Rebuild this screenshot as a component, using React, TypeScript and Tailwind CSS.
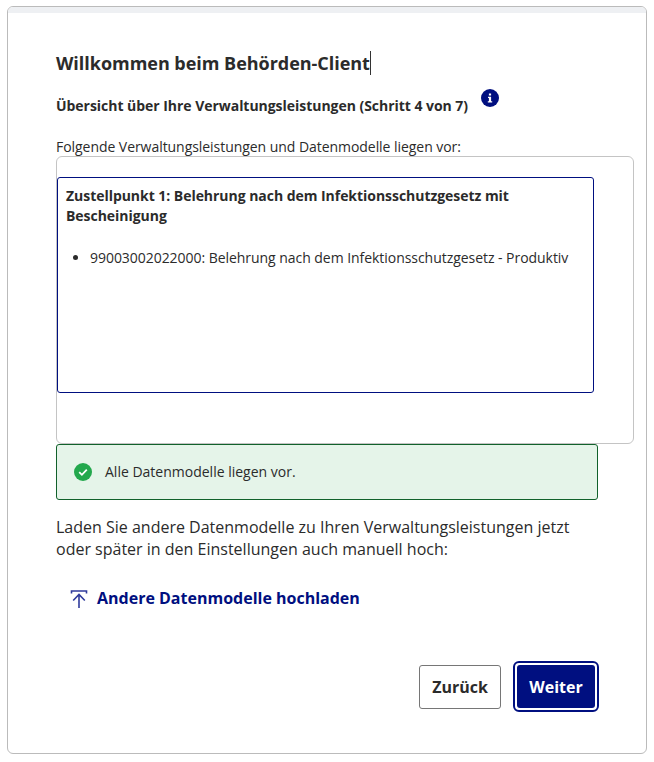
export default function App() {
  return (
    <div className="w-[654px] h-[762px] bg-white text-[#2b2b2b] font-['Open_Sans','Noto_Sans',sans-serif] pl-[7px] pr-[7px] pt-[6px] pb-[8px]">
      <div className="w-[640px] h-[748px] border border-[#bbbbbb] rounded-[6px] bg-white overflow-hidden">
        <div className="h-[6px] bg-[#eef0f3]" />
        <div className="pl-[48px] pr-[48px] pt-[36px]">
          <h1 className="flex h-[28px] items-center text-[18px] leading-[28px] font-bold tracking-[-0.03px]">
            <span>Willkommen beim Behörden-Client</span>
            <span className="w-px h-[24px] bg-[#333333]" />
          </h1>
          <div className="mt-[15px] flex h-[24px] items-start">
            <span className="mt-[4px] text-[14px] leading-[20px] font-bold whitespace-nowrap tracking-[-0.035px]">Übersicht über Ihre Verwaltungsleistungen (Schritt 4 von 7)</span>
            <svg className="ml-[13px] mt-[-3px]" width="18" height="18" viewBox="0 0 18 18">
              <circle cx="9" cy="9" r="9" fill="#000f80" />
              <path d="M7.9 4.4h2.2v2H7.9zM7 7.7h3.1v4.5h1.1v1.4H6.8v-1.4h1.1V9.1H7z" fill="#ffffff" />
            </svg>
          </div>
          <p className="mt-[21px] text-[14px] leading-[20px] whitespace-nowrap tracking-[-0.05px]">Folgende Verwaltungsleistungen und Datenmodelle liegen vor:</p>
          <div className="w-[578px] h-[288px] -mt-[1px] border border-[#c4c4c4] rounded-[6px] pt-[20px]">
            <div className="w-[537px] h-[216px] border border-[#000f80] rounded-[3px] pl-[8px] pt-[8px] pr-[8px]">
              <p className="text-[14px] leading-[20px] font-bold tracking-[-0.04px]">Zustellpunkt 1: Belehrung nach dem Infektionsschutzgesetz mit Bescheinigung</p>
              <ul className="mt-[22px] pl-[24px] list-disc text-[14px] leading-[20px] whitespace-nowrap tracking-[-0.045px]">
                <li>99003002022000: Belehrung nach dem Infektionsschutzgesetz - Produktiv</li>
              </ul>
            </div>
          </div>
          <div className="flex items-center w-[542px] h-[56px] border border-[#11612b] rounded-[3px] bg-[#e5f4e9] pl-[17px]">
            <svg width="18" height="18" viewBox="0 0 18 18">
              <circle cx="9" cy="9" r="9" fill="#23a84d" />
              <path d="M5.2 9.2l2.7 2.6 4.9-5.1" fill="none" stroke="#ffffff" strokeWidth="1.8" />
            </svg>
            <span className="ml-[13px] text-[14px] leading-[20px]">Alle Datenmodelle liegen vor.</span>
          </div>
          <p className="mt-[16px] w-[540px] text-[16px] leading-[22px]">Laden Sie andere Datenmodelle zu Ihren Verwaltungsleistungen jetzt oder später in den Einstellungen auch manuell hoch:</p>
          <div className="mt-[26px] ml-[14px] flex h-[24px] items-center text-[#000f80]">
            <svg width="18" height="20" viewBox="0 0 18 20" fill="none" stroke="#2f3a9c" strokeWidth="1.6">
              <path d="M1.5 5.5V3h15v2.5M9 20V6.5M3.2 12.5L9 6.5l5.8 6" />
            </svg>
            <span className="ml-[9px] text-[16px] leading-[24px] font-bold">Andere Datenmodelle hochladen</span>
          </div>
          <div className="mt-[51px] w-[543px] flex justify-end items-center gap-[12px]">
            <button className="w-[82px] h-[44px] border border-[#767676] rounded-[3px] bg-white text-[16px] font-bold">Zurück</button>
            <button className="w-[86px] h-[51px] border-2 border-[#000f80] rounded-[6px] p-[2px] bg-white">
              <span className="flex h-full w-full items-center justify-center rounded-[3px] bg-[#000f80] text-white text-[16px] font-bold">Weiter</span>
            </button>
          </div>
        </div>
      </div>
    </div>
  );
}
